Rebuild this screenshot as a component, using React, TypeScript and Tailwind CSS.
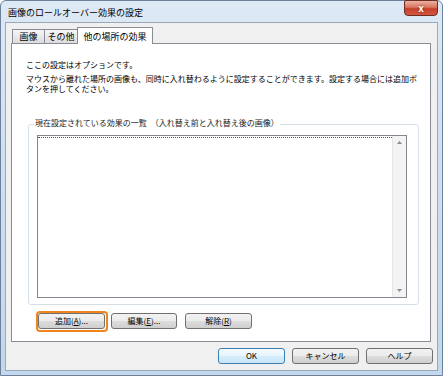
import { ReactNode } from "react";

interface BtnProps {
  children: ReactNode;
  className?: string;
  primary?: boolean;
}

function Btn({ children, className, primary }: BtnProps) {
  return (
    <div
      className={[
        "h-[16px] flex items-center justify-center rounded-[3px] border text-[8px] leading-none text-black",
        primary
          ? "border-[#3c7fb1] bg-[linear-gradient(to_bottom,#f4fafe_0%,#e6f4fc_50%,#d6edfa_51%,#c9e6f7_100%)]"
          : "border-[#707070] bg-[linear-gradient(to_bottom,#f2f2f2_0%,#ebebeb_50%,#dddddd_51%,#cfcfcf_100%)]",
        className ?? "",
      ].join(" ")}
    >
      {children}
    </div>
  );
}

function Tab({ label, active, className }: { label: string; active?: boolean; className?: string }) {
  if (active) {
    return (
      <div
        className={
          "h-[17px] -mb-[1px] z-10 flex items-center justify-center bg-white border border-b-0 border-[#898c95] text-[9px] leading-none text-black " +
          (className ?? "")
        }
      >
        {label}
      </div>
    );
  }
  return (
    <div
      className={
        "h-[14px] mt-[2px] flex items-center justify-center border border-b-0 border-[#898c95] bg-[linear-gradient(to_bottom,#f6f6f6,#dcdcdc)] text-[9px] leading-none text-black " +
        (className ?? "")
      }
    >
      {label}
    </div>
  );
}

export default function App() {
  return (
    <div className="w-[443px] h-[376px] font-['Noto_Sans_CJK_JP',sans-serif] bg-white">
      <div className="w-full h-full flex flex-col rounded-t-[6px] border border-[#6d829a] bg-[linear-gradient(to_bottom,#dde9f5_0%,#cfe0f1_40%,#c3d7ed_100%)]">
        {/* title bar */}
        <div className="h-[21px] flex items-start justify-between">
          <div className="pl-[7px] pt-[6px] text-[9px] leading-[11px] text-black">
            画像のロールオーバー効果の設定
          </div>
          <div className="mr-[4px] -mt-[1px] w-[34px] h-[16px] flex items-center justify-center rounded-b-[4px] rounded-t-[2px] border border-[#6e2c23] bg-[linear-gradient(to_bottom,#eab3a3_0%,#d9745f_45%,#c4402c_55%,#d2583f_100%)]">
            <span className="text-[10px] leading-none font-bold text-white [text-shadow:0_0_2px_#5a1a10]">x</span>
          </div>
        </div>

        {/* client area */}
        <div className="flex-1 mx-[4px] mb-[4px] bg-[#f0f0f0] border border-[#99a9bc] flex flex-col">
          <div className="pl-[5px] pr-[6px] pt-[4px]">
            {/* tabs */}
            <div className="flex items-start pl-[1px] h-[16px]">
              <Tab label="画像" className="w-[33px]" />
              <Tab label="その他" className="w-[33px] border-l-0" />
              <Tab label="他の場所の効果" active className="w-[76px] -ml-[1px]" />
            </div>

            {/* tab page */}
            <div className="h-[299px] bg-white border border-[#898c95] flex flex-col">
              <div className="ml-[14px] mt-[16px] text-[8px] leading-[10px] text-black">
                ここの設定はオプションです。
              </div>
              <div className="ml-[14px] mt-[4px] text-[8px] leading-[10px] text-black">
                マウスから離れた場所の画像も、同時に入れ替わるように設定することができます。設定する場合には追加ボ
                <br />
                タンを押してください。
              </div>

              {/* group box */}
              <div className="relative ml-[16px] mr-[11px] mt-[30px] h-[181px] rounded-[3px] border border-[#d5dfe5] pl-[8px] pt-[10px]">
                <div className="absolute left-[5px] -top-[7px] bg-white px-[1px] text-[8px] leading-[10px] text-[#1a1a1a]">
                  現在設定されている効果の一覧　（入れ替え前と入れ替え後の画像）
                </div>
                <div className="w-[370px] h-[163px] border border-[#828790] bg-white flex">
                  <div className="flex-1">
                    <div className="mt-[1px] border-t border-dotted border-[#5a5a5a]" />
                  </div>
                  <div className="w-[14px] bg-[#f3f3f3] border-l border-[#e6e6e6] flex flex-col items-center justify-between py-[5px]">
                    <svg width="5" height="3" viewBox="0 0 5 3">
                      <path d="M0 3 L2.5 0 L5 3 Z" fill="#8c8c8c" />
                    </svg>
                    <svg width="5" height="3" viewBox="0 0 5 3">
                      <path d="M0 0 L2.5 3 L5 0 Z" fill="#8c8c8c" />
                    </svg>
                  </div>
                </div>
              </div>

              {/* group buttons */}
              <div className="ml-[24px] mt-[6px] flex items-start">
                <div className="rounded-[4px] border-2 border-[#f0841e] pr-[1px] pb-[1px]">
                  <Btn className="w-[67px]">追加(<u>A</u>)...</Btn>
                </div>
                <Btn className="w-[66px] ml-[3px] mt-[2px]">編集(<u>E</u>)...</Btn>
                <Btn className="w-[67px] ml-[8px] mt-[2px]">解除(<u>R</u>)</Btn>
              </div>
            </div>
          </div>

          {/* dialog buttons */}
          <div className="mt-[6px] flex justify-end gap-[7px] pr-[4px]">
            <Btn primary className="w-[67px]">OK</Btn>
            <Btn className="w-[67px]">キャンセル</Btn>
            <Btn className="w-[67px]">ヘルプ</Btn>
          </div>
        </div>
      </div>
    </div>
  );
}
